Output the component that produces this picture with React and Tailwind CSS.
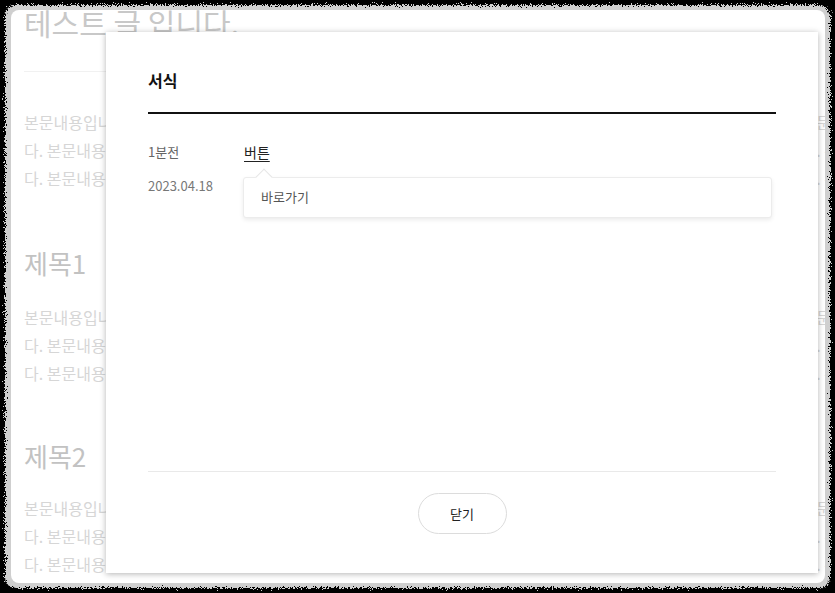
const body = '본문내용입니다. '.repeat(12)

function BodyLines() {
  return (
    <div className="text-[16px] leading-[28px] text-[#d6d6d6] whitespace-nowrap">
      <p>{body}본문내용입니</p>
      <p>다. {body}</p>
      <p>다. {body}</p>
    </div>
  )
}

function Popover() {
  return (
    <div className="absolute left-[-1px] top-[34px] w-[529px] h-[41px] rounded-[3px] border border-[#ececec] bg-white shadow-[0_2px_4px_rgba(0,0,0,0.08)]">
      <span className="absolute left-[14px] top-[-7px] size-[12px] rotate-45 border-l border-t border-[#e6e6e6] bg-white" />
      <p className="pl-[17px] pt-[9px] text-[13px] leading-[20px] text-[#555]">바로가기</p>
    </div>
  )
}

export default function App() {
  return (
    <div
      className="relative w-[835px] h-[593px] overflow-hidden bg-black"
      style={{ fontFamily: '"Noto Sans CJK KR", "Noto Sans", sans-serif' }}
    >
      <svg className="absolute size-0">
        <filter id="torn">
          <feTurbulence type="fractalNoise" baseFrequency="1.2" numOctaves="3" seed="5" />
          <feDisplacementMap in="SourceGraphic" scale="9" xChannelSelector="R" yChannelSelector="G" />
        </filter>
      </svg>

      <div className="absolute left-[5px] top-[5px] w-[825px] h-[583px] rounded-[10px] bg-[#cfcfcf] [filter:url(#torn)]" />

      <div className="absolute left-[11px] top-[10px] w-[814px] h-[573px] overflow-hidden rounded-[8px] bg-white">
        <div className="pl-[13px] mt-[-6px]">
          <h1 className="text-[30px] leading-[36px] text-[#c8c8c8] whitespace-nowrap">테스트 글 입니다.</h1>
          <div className="mt-[31px] mr-[14px] border-b border-[#f1f1f1]" />
          <div className="mt-[36px]">
            <BodyLines />
          </div>
          <h2 className="mt-[55px] text-[26px] leading-[32px] text-[#c2c2c2]">제목1</h2>
          <div className="mt-[24px]">
            <BodyLines />
          </div>
          <h2 className="mt-[53px] text-[26px] leading-[32px] text-[#c2c2c2]">제목2</h2>
          <div className="mt-[22px]">
            <BodyLines />
          </div>
        </div>
      </div>

      <div className="absolute left-[106px] top-[32px] w-[712px] h-[541px] flex flex-col bg-white shadow-[0_1px_6px_rgba(0,0,0,0.3)]">
        <div className="flex-1 px-[42px]">
          <h3 className="pt-[36px] pb-[20px] border-b-2 border-[#111] text-[16px] leading-[24px] font-bold text-[#111]">
            서식
          </h3>
          <div className="mt-[29px] flex text-[13px] leading-[18px]">
            <div className="w-[96px] text-[#666]">
              <p>1분전</p>
              <p className="mt-[16px] text-[#777]">2023.04.18</p>
            </div>
            <div className="relative">
              <button type="button" className="text-[14px] leading-[18px] text-[#222] underline underline-offset-[3px]">
                버튼
              </button>
              <Popover />
            </div>
          </div>
        </div>
        <div className="mx-[42px] border-t border-[#e9e9e9] pt-[21px] pb-[39px] flex justify-center">
          <button
            type="button"
            className="w-[89px] h-[41px] rounded-full border border-[#dcdcdc] bg-white text-[13px] text-[#222]"
          >
            닫기
          </button>
        </div>
      </div>
    </div>
  )
}
